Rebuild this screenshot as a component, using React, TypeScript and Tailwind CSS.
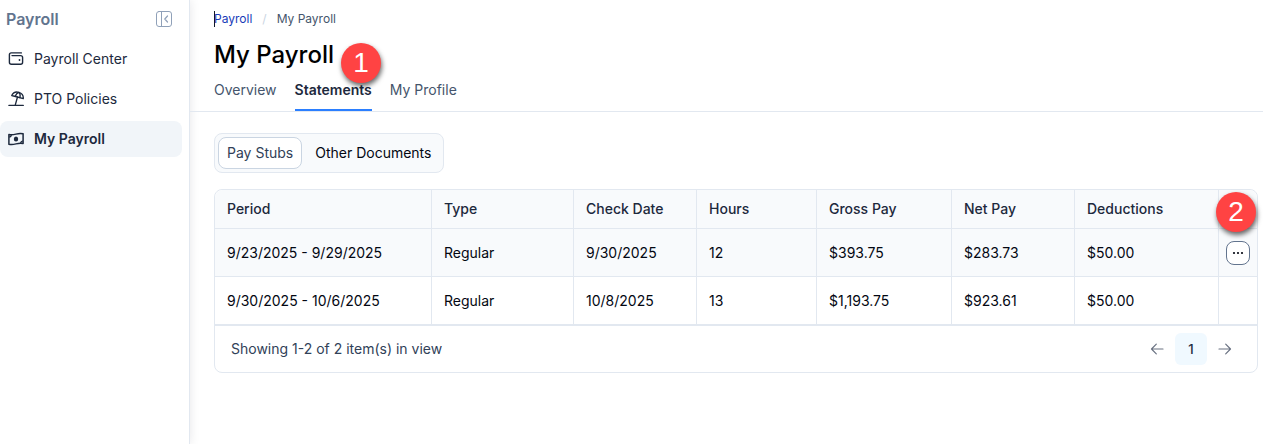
import { useState } from "react";
import clsx from "clsx";

const NAV_ITEMS = [
  { label: "Payroll Center", Icon: WalletIcon },
  { label: "PTO Policies", Icon: UmbrellaIcon },
  { label: "My Payroll", Icon: MoneyIcon },
];

const TABS = ["Overview", "Statements", "My Profile"];

const DOCUMENT_TYPES = ["Pay Stubs", "Other Documents"];

const COLUMNS = [
  { label: "Period", width: "w-[217px]" },
  { label: "Type", width: "w-[142px]" },
  { label: "Check Date", width: "w-[123px]" },
  { label: "Hours", width: "w-[120px]" },
  { label: "Gross Pay", width: "w-[135px]" },
  { label: "Net Pay", width: "w-[123px]" },
  { label: "Deductions", width: "w-[144px]" },
];

const STUBS = [
  ["9/23/2025 - 9/29/2025", "Regular", "9/30/2025", "12", "$393.75", "$283.73", "$50.00"],
  ["9/30/2025 - 10/6/2025", "Regular", "10/8/2025", "13", "$1,193.75", "$923.61", "$50.00"],
];

function WalletIcon() {
  return (
    <svg className="size-4" viewBox="0 0 16 16" fill="none" stroke="currentColor" strokeWidth="1.4" strokeLinecap="round" strokeLinejoin="round" aria-hidden="true">
      <path d="M13.4 1.9H3.3A1.9 1.9 0 0 0 1.4 3.8v7.5a2 2 0 0 0 2 2h9.200a2 2 0 0 0 2-2V6.600a2 2 0 0 0-2-2H4" />
      <circle cx="11.5" cy="9" r="0.9" fill="currentColor" stroke="none" />
    </svg>
  );
}

function UmbrellaIcon() {
  return (
    <svg className="size-4" viewBox="0 0 16 16" fill="none" stroke="currentColor" strokeWidth="1.3" strokeLinecap="round" strokeLinejoin="round" aria-hidden="true">
      <path d="M.9 14.4h14.4M7.2 14.2l2.300-8.200" />
      <path d="M3.700 4.500C5 1.800 7.900.500 10.800 1.300c2.900.8 4.700 3.400 4.500 6.400Z" />
      <path d="M7.300 5.300C8 3.200 9.200 1.700 10.800 1.300c1.300 1.200 1.700 3.100 1.100 5.400" />
    </svg>
  );
}

function MoneyIcon() {
  return (
    <svg className="size-4" viewBox="0 0 16 16" fill="none" stroke="currentColor" strokeWidth="1.5" strokeLinejoin="round" aria-hidden="true">
      <path d="M.9 3.500c2.400.8 4.700.3 7.100-.4s4.700-1 7.100-.3v9.700c-2.400-.7-4.700-.3-7.100.4s-4.700 1.100-7.100.3Z" />
      <path d="M1 6c1.400 0 2.200-.8 2.300-2.100M15 10c-1.400 0-2.200.8-2.300 2.100" strokeWidth="1.2" />
      <ellipse cx="8" cy="8" rx="2.2" ry="2.6" fill="currentColor" stroke="none" />
    </svg>
  );
}

function CollapseIcon() {
  return (
    <svg className="size-4" viewBox="0 0 16 16" fill="none" stroke="currentColor" strokeLinecap="round" strokeLinejoin="round" aria-hidden="true">
      <rect x="0.5" y="0.5" width="15" height="15" rx="2.5" />
      <path d="M5.5.5v15" />
      <path d="M11.5 5 8.8 8l2.700 3" strokeWidth="1.2" />
    </svg>
  );
}

function ArrowIcon({ flip = false }: { flip?: boolean }) {
  return (
    <svg className={clsx("h-3 w-3.5", flip && "rotate-180")} viewBox="0 0 14 12" fill="none" stroke="currentColor" strokeWidth="1.2" strokeLinecap="round" strokeLinejoin="round" aria-hidden="true">
      <path d="M1.500 6h11.500M6.300 1.200 1.500 6l4.800 4.800" />
    </svg>
  );
}

function StepBadge({ step, className }: { step: number; className: string }) {
  return (
    <span
      className={clsx(
        "absolute flex size-10 items-center justify-center rounded-full bg-[#ff4343] font-['Liberation_Sans',sans-serif] text-[28px] leading-none font-normal text-white shadow-[1px_3px_5px_rgba(0,0,0,0.6)]",
        className,
      )}
    >
      {step}
    </span>
  );
}

function Sidebar() {
  return (
    <aside className="w-[190px] shrink-0 border-r border-slate-200 shadow-[0_0_10px_rgba(15,23,42,0.1)]">
      <div className="flex h-[38px] items-center justify-between pr-[17px] pl-1.5">
        <h2 className="text-base font-semibold text-slate-500">Payroll</h2>
        <button type="button" aria-label="Collapse menu" className="text-slate-400">
          <CollapseIcon />
        </button>
      </div>
      <nav className="mt-[3px] flex flex-col gap-1 pr-[7px]">
        {NAV_ITEMS.map(({ label, Icon }) => {
          const active = label === "My Payroll";
          return (
            <a
              key={label}
              href="#"
              aria-current={active ? "page" : undefined}
              className={clsx(
                "flex h-9 items-center gap-2.5 rounded-lg pl-2 text-slate-800",
                active && "bg-slate-100 font-semibold",
              )}
            >
              <Icon />
              {label}
            </a>
          );
        })}
      </nav>
    </aside>
  );
}

function PayStubTable() {
  return (
    <div className="mt-4 rounded-lg border border-slate-200">
      <table className="w-full table-fixed border-separate border-spacing-0 text-left">
        <thead>
          <tr className="h-[39px]">
            {COLUMNS.map(({ label, width }) => (
              <th key={label} className={clsx(width, "border-r border-b border-slate-200 bg-slate-50 px-3 font-medium text-slate-800 first:rounded-tl-lg")}>
                {label}
              </th>
            ))}
            <th aria-label="Actions" className="relative w-[38px] rounded-tr-lg border-b border-slate-200 bg-slate-50">
              <StepBadge step={2} className="top-0.5 right-px" />
            </th>
          </tr>
        </thead>
        <tbody>
          {STUBS.map((stub, i) => (
            <tr key={stub[0]} className={clsx("h-12", i === 0 && "bg-slate-50")}>
              {stub.map((value, col) => (
                <td key={col} className="border-r border-b border-slate-200 px-3">
                  {value}
                </td>
              ))}
              <td className="border-b border-slate-200">
                {i === 0 && (
                  <button type="button" aria-label="More actions" className="mx-auto flex size-6 items-center justify-center rounded-lg border border-slate-500 bg-white">
                    <svg className="h-1 w-3" viewBox="0 0 12 4" fill="currentColor" aria-hidden="true">
                      <circle cx="2" cy="2" r="1.1" />
                      <circle cx="6" cy="2" r="1.1" />
                      <circle cx="10" cy="2" r="1.1" />
                    </svg>
                  </button>
                )}
              </td>
            </tr>
          ))}
        </tbody>
      </table>
      <div className="flex h-[47px] items-center justify-between border-t border-slate-200 px-4">
        <p className="text-slate-700">Showing 1-2 of 2 item(s) in view</p>
        <div className="flex items-center text-gray-500">
          <button type="button" aria-label="Previous page" className="flex size-8 items-center justify-center">
            <ArrowIcon />
          </button>
          <button type="button" aria-current="page" className="mx-0.5 size-8 rounded-md bg-sky-50 text-[13px] font-medium text-slate-800">
            1
          </button>
          <button type="button" aria-label="Next page" className="flex size-8 items-center justify-center">
            <ArrowIcon flip />
          </button>
        </div>
      </div>
    </div>
  );
}

export default function App() {
  const [tab, setTab] = useState("Statements");
  const [docType, setDocType] = useState("Pay Stubs");

  return (
    <div className="flex min-h-screen bg-white font-['Inter',sans-serif] text-sm text-gray-950">
      <Sidebar />
      <main className="min-w-0 flex-1">
        <header className="border-b border-slate-200 pt-[11px] pl-6">
          <nav aria-label="Breadcrumb" className="flex gap-2.5 text-xs text-slate-600">
            <a href="#" className="relative text-blue-800">
              <span className="absolute inset-y-0 left-0 w-px bg-slate-900" />
              Payroll
            </a>
            <span className="text-slate-300">/</span>
            <span>My Payroll</span>
          </nav>
          <div className="mt-3 flex">
            <h1 className="relative text-2xl font-medium text-black">
              My Payroll
              <StepBadge step={1} className="top-1 left-[127px]" />
            </h1>
          </div>
          <div role="tablist" className="mt-2 flex gap-[18px]">
            {TABS.map((name) => (
              <button
                key={name}
                type="button"
                role="tab"
                aria-selected={tab === name}
                onClick={() => setTab(name)}
                className={clsx(
                  "h-8 border-b-2 pb-2",
                  tab === name ? "border-blue-500 font-semibold text-slate-800" : "border-transparent text-slate-600",
                )}
              >
                {name}
              </button>
            ))}
          </div>
        </header>
        <section className="pt-[21px] pr-[5px] pl-6">
          <div className="inline-flex h-10 items-center gap-1 rounded-lg border border-slate-200 bg-slate-50 px-[3px]">
            {DOCUMENT_TYPES.map((name) => (
              <button
                key={name}
                type="button"
                aria-pressed={docType === name}
                onClick={() => setDocType(name)}
                className={clsx(
                  "h-8 rounded-lg border px-2",
                  docType === name ? "border-slate-300 bg-white text-slate-700" : "border-transparent",
                )}
              >
                {name}
              </button>
            ))}
          </div>
          <PayStubTable />
        </section>
      </main>
    </div>
  );
}
